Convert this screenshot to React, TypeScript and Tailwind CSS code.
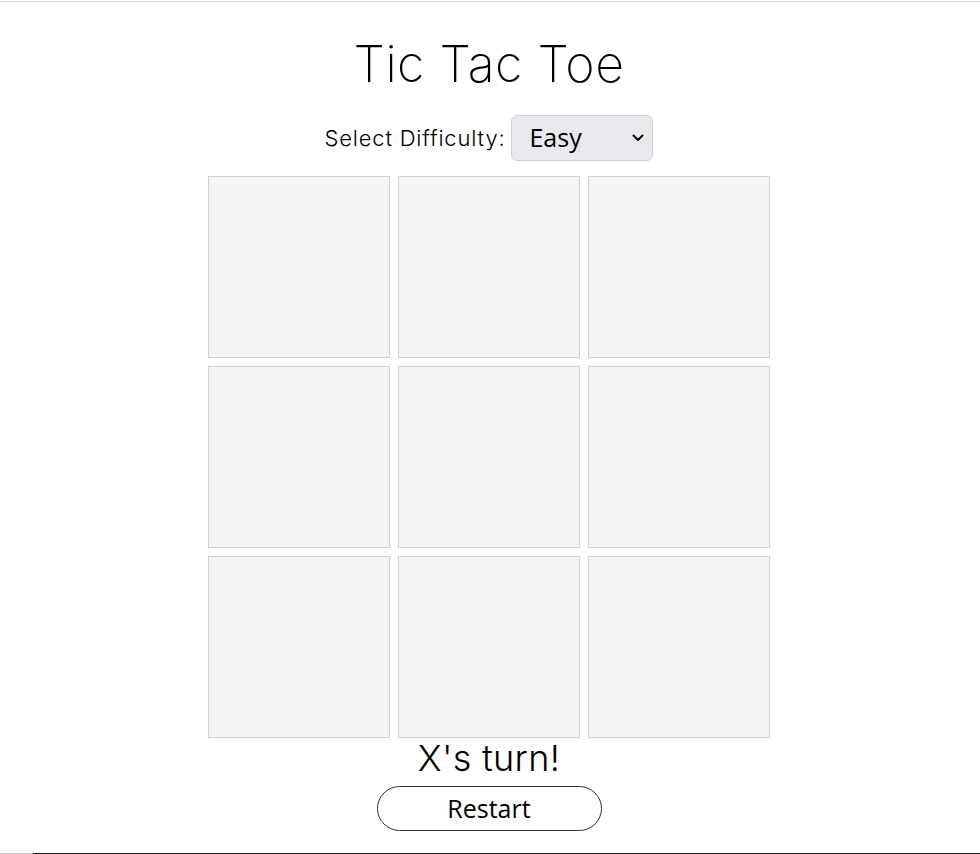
import React, { useState } from "react";

export default function App() {
  const [board, setBoard] = useState<(string | null)[]>(Array(9).fill(null));
  const [difficulty, setDifficulty] = useState("easy");
  const turn = "X";

  return (
    <div className="w-[980px] h-[854px] bg-white flex flex-col overflow-hidden">
      <div className="h-px bg-[#d3d3d3] mt-px w-full" />
      <div className="flex-1 w-[978px] flex flex-col items-center">
        <h1
          className="mt-[30px] h-[64px] leading-[64px] text-[50px] text-black tracking-[0.5px]"
          style={{ fontFamily: "Inter, 'Noto Sans', sans-serif", fontWeight: 250 }}
        >
          Tic Tac Toe
        </h1>
        <div className="mt-[19px] flex items-center gap-[6px]">
          <label
            className="text-[22px] text-black tracking-[0.8px]"
            style={{ fontFamily: "Inter, 'Noto Sans', sans-serif", fontWeight: 280 }}
          >
            Select Difficulty:
          </label>
          <div className="relative">
            <select
              value={difficulty}
              onChange={(e) => setDifficulty(e.target.value)}
              className="appearance-none w-[142px] h-[46px] rounded-[6px] border border-[#cfcfd6] bg-[#e9e9ed] pl-[17px] text-[25px] text-black outline-none"
              style={{ fontFamily: "'Open Sans', 'Noto Sans', sans-serif" }}
            >
              <option value="easy">Easy</option>
              <option value="medium">Medium</option>
              <option value="hard">Hard</option>
            </select>
            <svg
              className="absolute right-[8px] top-[17px] pointer-events-none"
              width="14"
              height="12"
              viewBox="0 0 14 12"
            >
              <path d="M2.5 3.5 L7 8 L11.5 3.5" stroke="#000" strokeWidth="2" fill="none" strokeLinecap="round" strokeLinejoin="round" />
            </svg>
          </div>
        </div>
        <div className="mt-[15px] grid grid-cols-[182px_182px_182px] gap-x-[8px] gap-y-[8px]">
          {board.map((v, i) => (
            <button
              key={i}
              onClick={() => {
                if (!board[i]) {
                  const nb = [...board];
                  nb[i] = turn;
                  setBoard(nb);
                }
              }}
              className="w-[182px] h-[182px] border border-[#d0d0d0] bg-[#f4f4f4] text-[80px]"
            >
              {v}
            </button>
          ))}
        </div>
        <div
          className="-mt-[2px] text-[36px] leading-[44px] text-black tracking-[0.3px]"
          style={{ fontFamily: "Inter, 'Noto Sans', sans-serif", fontWeight: 300 }}
        >
          X's turn!
        </div>
        <button
          onClick={() => setBoard(Array(9).fill(null))}
          className="mt-[6px] w-[225px] h-[45px] rounded-full border border-[#333] bg-white text-[25px] text-black"
          style={{ fontFamily: "'Open Sans', 'Noto Sans', sans-serif" }}
        >
          Restart
        </button>
      </div>
      <div className="flex h-px w-full">
        <div className="w-[33px] bg-[#c4c4c4]" />
        <div className="flex-1 bg-[#222]" />
      </div>
    </div>
  );
}
